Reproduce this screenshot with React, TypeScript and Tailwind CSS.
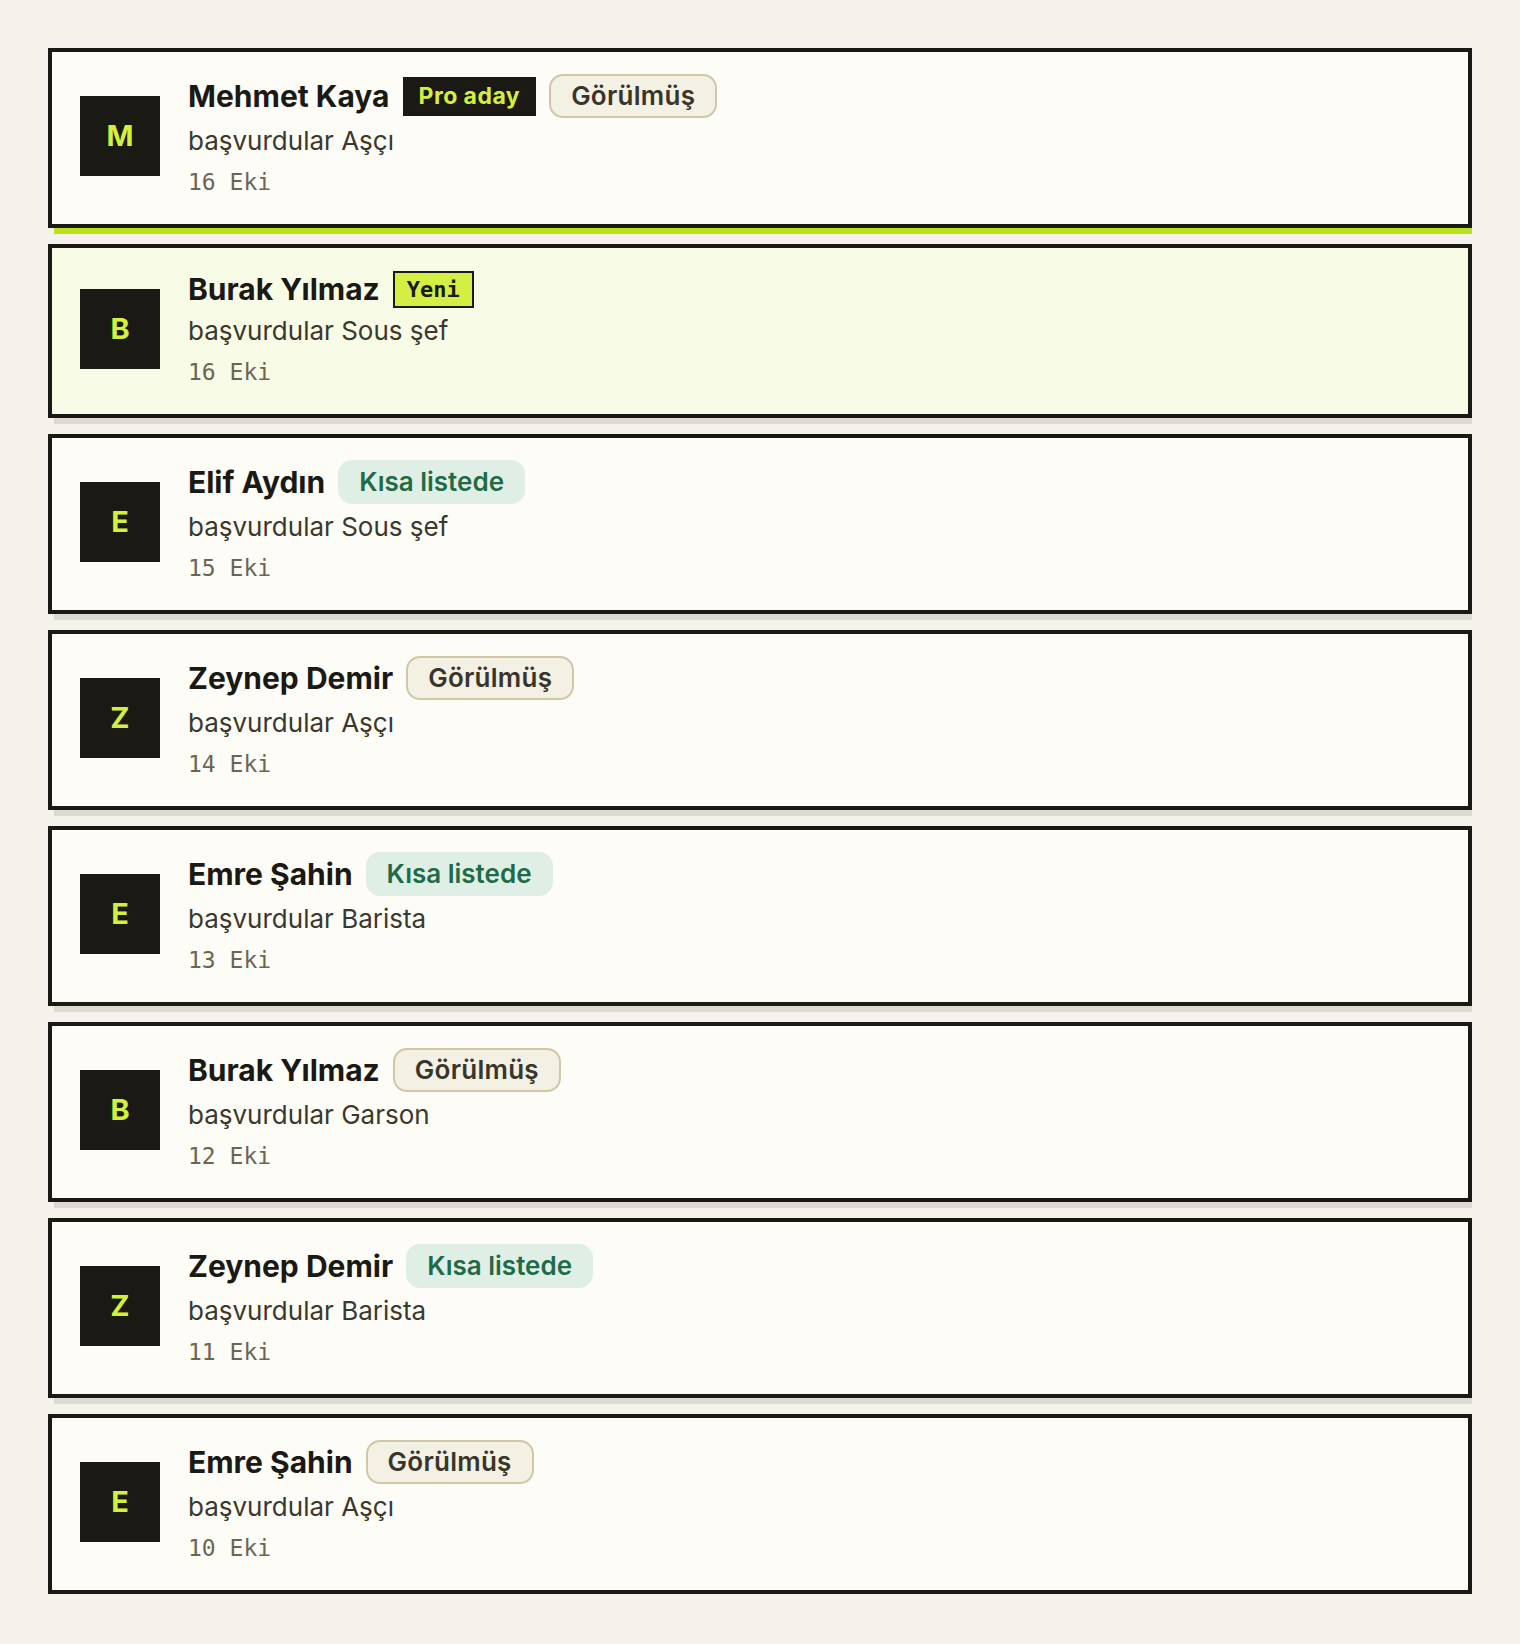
type Tag = 'pro' | 'new' | 'seen' | 'short'

type Applicant = {
  name: string
  role: string
  date: string
  tags: Tag[]
}

const APPLICANTS: Applicant[] = [
  { name: 'Mehmet Kaya',  role: 'Aşçı',     date: '16 Eki', tags: ['pro', 'seen'] },
  { name: 'Burak Yılmaz', role: 'Sous şef', date: '16 Eki', tags: ['new'] },
  { name: 'Elif Aydın',   role: 'Sous şef', date: '15 Eki', tags: ['short'] },
  { name: 'Zeynep Demir', role: 'Aşçı',     date: '14 Eki', tags: ['seen'] },
  { name: 'Emre Şahin',   role: 'Barista',  date: '13 Eki', tags: ['short'] },
  { name: 'Burak Yılmaz', role: 'Garson',   date: '12 Eki', tags: ['seen'] },
  { name: 'Zeynep Demir', role: 'Barista',  date: '11 Eki', tags: ['short'] },
  { name: 'Emre Şahin',   role: 'Aşçı',     date: '10 Eki', tags: ['seen'] },
]

function Badge({ tag }: { tag: Tag }) {
  if (tag === 'pro')
    return (
      <span className="shrink-0 bg-[#1a1914] text-[#d4f03c] text-[23px] font-bold tracking-[0.02em] leading-[27px] px-4 py-[6px]">
        Pro aday
      </span>
    )
  if (tag === 'new')
    return (
      <span className="shrink-0 bg-[#d4ef43] border-2 border-[#1a1914] text-[#1a1914] font-[family-name:'DejaVu_Sans_Mono',monospace] text-[22px] font-bold leading-[27px] px-3 py-[3px]">
        Yeni
      </span>
    )
  if (tag === 'short')
    return (
      <span className="shrink-0 bg-[#e0efe5] border-2 border-[#e0efe5] text-[#1f6b48] text-[26px] font-semibold leading-[30px] px-[19px] py-[5px] rounded-[14px]">
        Kısa listede
      </span>
    )
  return (
    <span className="shrink-0 bg-[#f3f0e4] border-2 border-[#cfc7a8] text-[#38352b] text-[26px] font-semibold tracking-[0.01em] leading-[30px] px-5 py-[5px] rounded-[14px]">
      Görülmüş
    </span>
  )
}

function ApplicantCard({ a, index }: { a: Applicant; index: number }) {
  const fresh = a.tags.includes('new')
  // first card is the active one, the rest get the plain drop
  const shadow = index === 0 ? 'shadow-[6px_6px_0_#bde01c]' : 'shadow-[6px_6px_0_#dcdad2]'
  return (
    <div
      className={`flex items-center gap-7 border-4 border-[#1a1914] px-7 pt-[22px] pb-[27px] ${shadow} ${
        fresh ? 'bg-[#f8fbe5]' : 'bg-[#fdfcf7]'
      }`}
    >
      <div className="w-20 h-20 shrink-0 bg-[#1a1914] flex items-center justify-center text-[#d4f03c] text-[29px] font-bold">
        {a.name[0]}
      </div>
      <div className="flex flex-col min-w-0">
        <div className="flex items-center gap-[13px]">
          <span className="text-[30px] font-bold leading-[38px] text-[#1a1914]">{a.name}</span>
          {a.tags.map(t => <Badge key={t} tag={t} />)}
        </div>
        <p className="mt-[6px] text-[26px] leading-[34px] text-[#3b382e]">başvurdular {a.role}</p>
        <p className="mt-[9px] font-[family-name:'DejaVu_Sans_Mono',monospace] text-[23px] leading-[30px] text-[#6b6553]">
          {a.date}
        </p>
      </div>
    </div>
  )
}

export default function App() {
  return (
    <div className="min-h-screen bg-[#f4f2eb] p-12 font-[family-name:Inter,sans-serif]">
      <div className="flex flex-col gap-4 overflow-hidden">
        {APPLICANTS.map((a, i) => (
          <ApplicantCard key={i} a={a} index={i} />
        ))}
      </div>
    </div>
  )
}
